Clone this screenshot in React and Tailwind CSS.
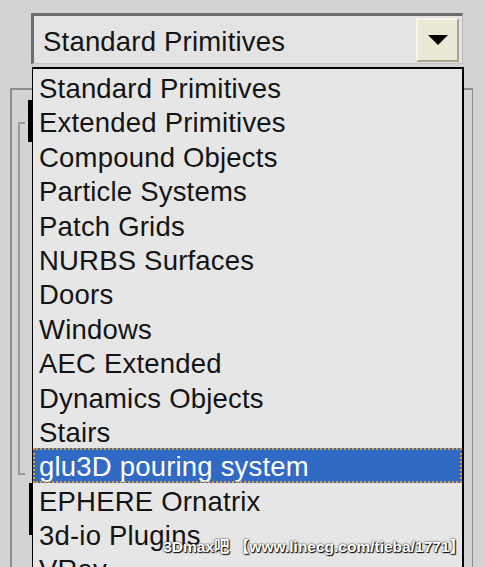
const ITEMS = [
  'Standard Primitives',
  'Extended Primitives',
  'Compound Objects',
  'Particle Systems',
  'Patch Grids',
  'NURBS Surfaces',
  'Doors',
  'Windows',
  'AEC Extended',
  'Dynamics Objects',
  'Stairs',
  'glu3D pouring system',
  'EPHERE Ornatrix',
  '3d-io Plugins',
  'VRay',
]

const SELECTED = 'glu3D pouring system'

export default function App() {
  return (
    <div className="relative w-[485px] h-[567px] overflow-hidden bg-[#d3d3d3] font-['Liberation_Sans',Arial,sans-serif] text-[#141414]">
      {/* Combo box */}
      <div className="ml-[31px] mt-[13px] w-[432px] h-[51px] flex items-center bg-[#e3e3e3] border-t-[3px] border-l-[3px] border-r border-b border-t-[#6e6e6e] border-l-[#6e6e6e] border-r-[#b8b8b8] border-b-[#c4c4c4]">
        <span className="flex-1 pl-[9px] pt-[4px] text-[27.5px] leading-none tracking-[0.2px]">Standard Primitives</span>
        <div className="mr-[3px] w-[43px] h-[44px] flex items-center justify-center bg-[#ebe8d6] border-t-2 border-l-2 border-r-2 border-b-2 border-t-[#f7f5ec] border-l-[#f7f5ec] border-r-[#a6a38c] border-b-[#a6a38c]">
          <svg width="20" height="10" viewBox="0 0 20 10">
            <polygon points="0,0 20,0 10,10" fill="#000" />
          </svg>
        </div>
      </div>

      {/* Rollout group behind the list */}
      <div className="ml-[10px] mt-[24px] w-[463px] h-[500px] flex border-l-2 border-t-2 border-r border-[#8e8e8e]">
        <div className="ml-[6px] mt-[32px] w-[7px] h-[353px] border-l-2 border-t-2 border-b-2 border-[#9a9a9a]" />
        <div className="ml-[3px] flex flex-col">
          <div className="mt-[10px] w-[4px] h-[42px] bg-black" />
          <div className="mt-[341px] w-[4px] h-[52px] ml-[1px] bg-black" />
        </div>
      </div>

      {/* Dropdown list */}
      <div className="absolute left-[32px] top-[67px] w-[432px] bottom-0 bg-[#e6e6e6] border-t-2 border-l border-r-2 border-black pt-[1px]">
        {ITEMS.map(item => (
          <div
            key={item}
            className={
              item === SELECTED
                ? 'h-[34.4px] pl-[6px] text-[27.5px] leading-[38px] tracking-[0.2px] whitespace-nowrap bg-[#316ac5] text-white outline-2 outline-dotted outline-[#d99c3a] -outline-offset-2'
                : 'h-[34.4px] pl-[6px] text-[27.5px] leading-[38px] tracking-[0.2px] whitespace-nowrap'
            }
          >
            {item}
          </div>
        ))}
      </div>

      {/* Watermark */}
      <div className="absolute right-[20px] bottom-[9px] text-[15.5px] font-bold text-white whitespace-nowrap [text-shadow:0_0_2px_#000,1px_1px_1px_#000] font-['Liberation_Sans','Noto_Sans_CJK_SC',sans-serif]">
        3Dmax吧 【www.linecg.com/tieba/1771】
      </div>
    </div>
  )
}
